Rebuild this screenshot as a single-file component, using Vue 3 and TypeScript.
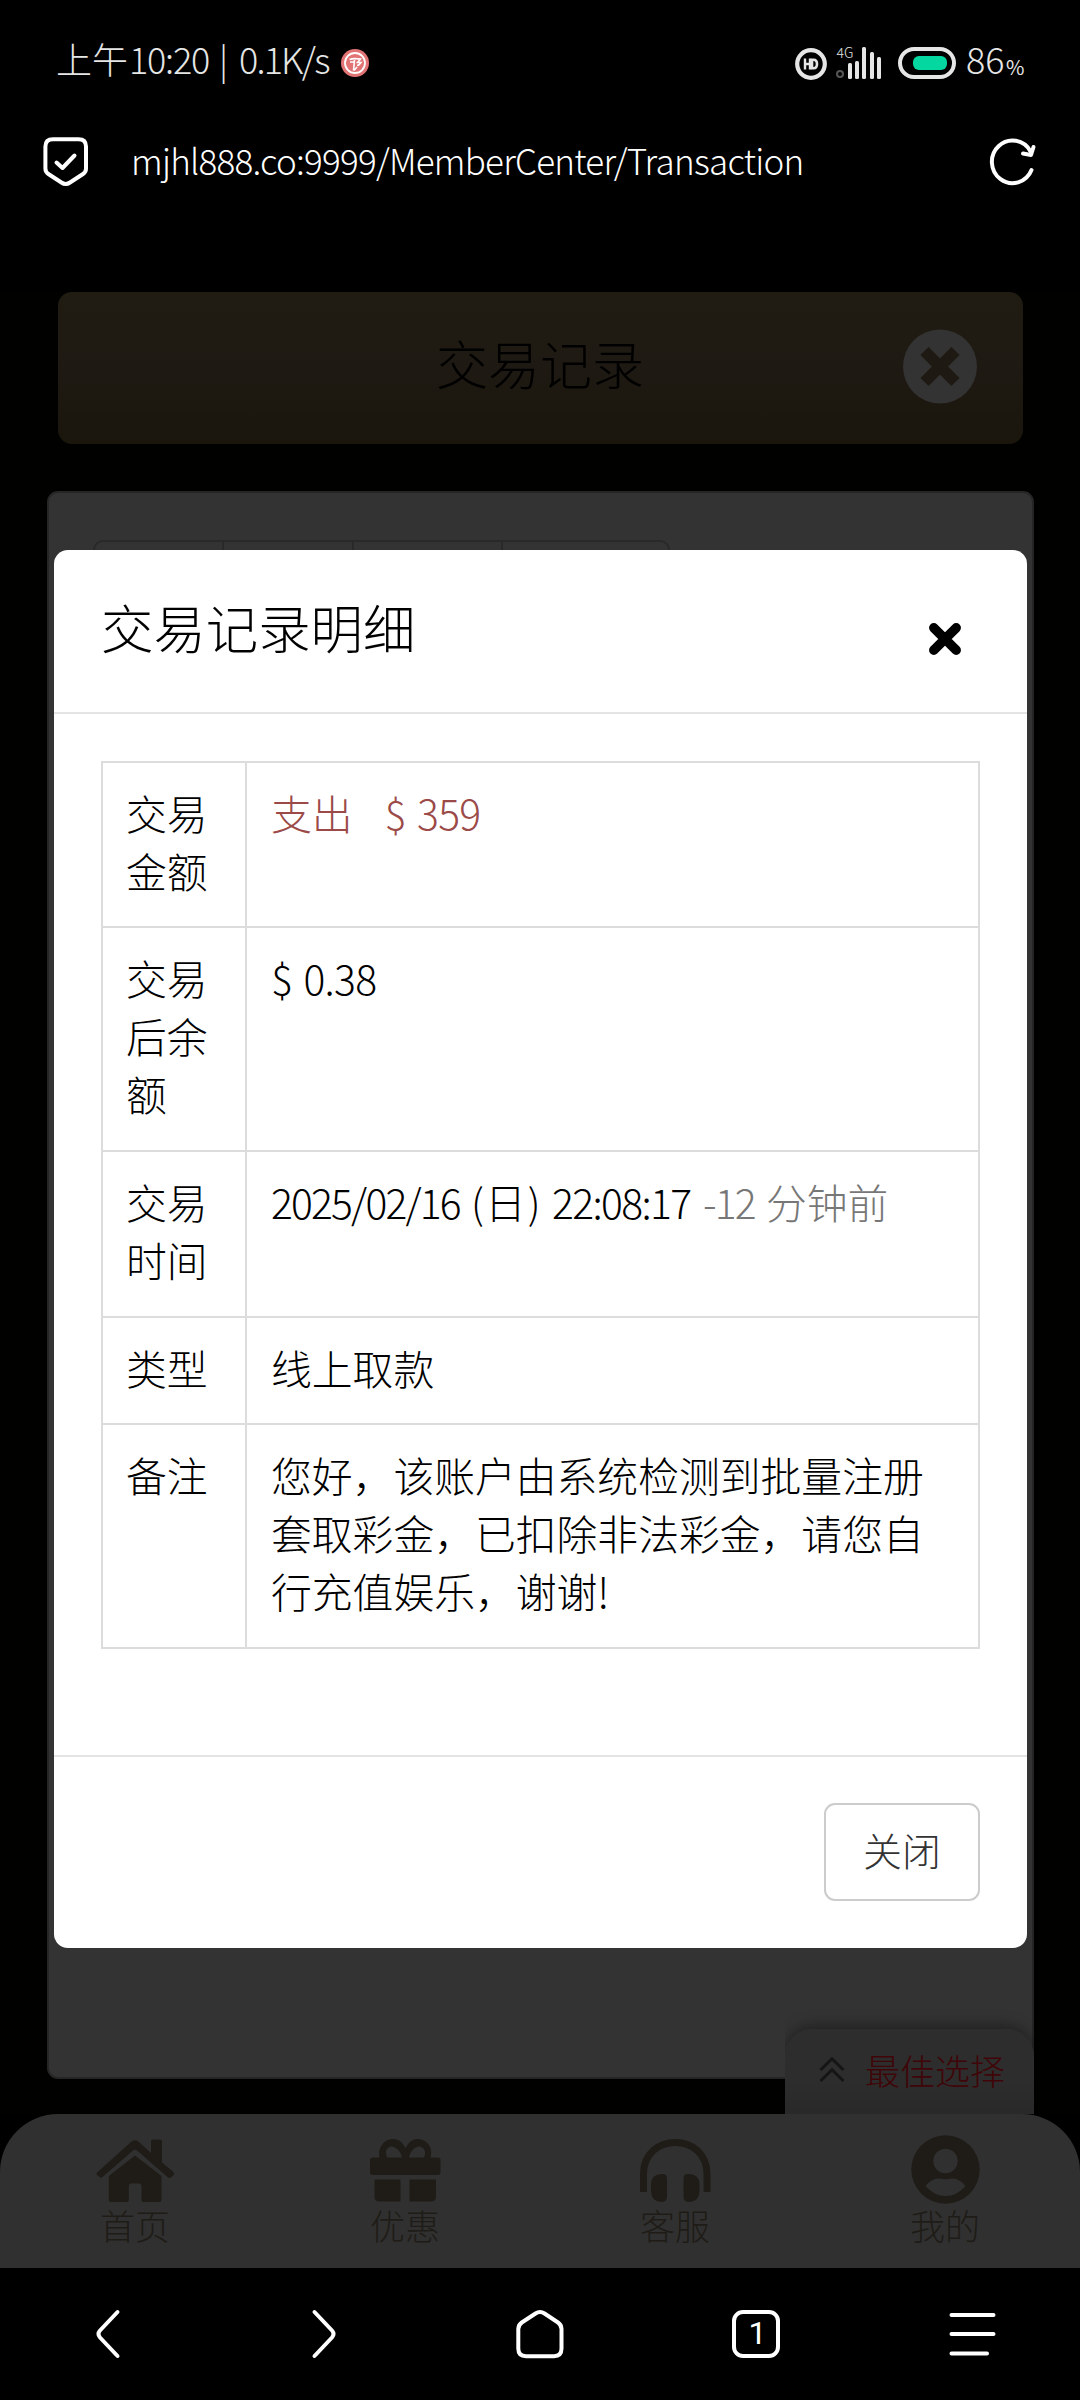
<script setup lang="ts">
interface Row {
  label: string
  kind: 'amount' | 'plain' | 'time' | 'note'
  height: number
  text: string
}

const rows: Row[] = [
  { label: '交易金额', kind: 'amount', height: 165, text: '$ 359' },
  { label: '交易后余额', kind: 'plain', height: 224, text: '$ 0.38' },
  { label: '交易时间', kind: 'time', height: 166, text: '2025/02/16' },
  { label: '类型', kind: 'note', height: 107, text: '线上取款' },
  {
    label: '备注',
    kind: 'note',
    height: 226,
    text: '您好，该账户由系统检测到批量注册套取彩金，已扣除非法彩金，请您自行充值娱乐，谢谢!',
  },
]

const filters: number[] = [127, 130, 149, 167]
const bars: number[] = [16, 18, 32, 27, 22]
</script>

<template>
  <div class="screen">
    <header class="status">
      <span class="cn">上午</span>
      <span class="clock">10:20</span>
      <span class="sep">|</span>
      <span class="rate">0.1K/s</span>
      <svg class="badge" viewBox="0 0 28 28">
        <circle cx="14" cy="14" r="14" fill="#e27475" />
        <circle cx="14" cy="14" r="10" fill="none" stroke="#fff" stroke-width="1.8" />
        <path d="M8.500 10.500Q12 9 19.500 10L16.500 13.500H20Q18 16.500 16 16.500M13.500 11L12.500 21.500M9 13H13M13 21.500L16 18" fill="none" stroke="#fff" stroke-width="1.600" />
      </svg>
      <span class="grow"></span>
      <svg class="hd" viewBox="0 0 32 32">
        <circle cx="16" cy="16" r="13.800" fill="none" stroke="#e6e6e6" stroke-width="4.200" />
        <path d="M10 10.500V21.500M10 16H15M15 10.500V21.500" fill="none" stroke="#e6e6e6" stroke-width="2.400" />
        <path d="M17 11.800H18.500Q22 11.800 22 16Q22 20.200 18.500 20.200H17Z" fill="none" stroke="#e6e6e6" stroke-width="2.600" />
      </svg>
      <div class="signal">
        <div class="net"><span>4G</span><i></i></div>
        <b v-for="(h, i) in bars" :key="i" :style="{ height: h + 'px' }"></b>
      </div>
      <div class="battery"><i></i></div>
      <span class="pct">86</span><span class="sign">%</span>
    </header>

    <div class="address">
      <svg class="shield" viewBox="0 0 46 50">
        <path d="M10 2.200H35.500Q43 2.200 43 9.500V31.500Q43 35 40 37L27 45.500Q22.700 48.500 18.400 45.500L5.400 37Q2.400 35 2.400 31.500V9.500Q2.400 2.200 10 2.200Z" />
        <path d="M13.500 25.500L19.500 31L31.500 18.500" />
      </svg>
      <span class="url">mjhl888.co:9999/MemberCenter/Transaction</span>
      <svg class="reload" viewBox="0 0 48 48">
        <path d="M42.500 32A20.600 21.300 0 1 1 41.500 13.500" />
        <path d="M44.500 9L42 17L34 15.500" />
      </svg>
    </div>

    <main class="page">
      <div class="heading">
        <span>交易记录</span>
        <svg viewBox="0 0 74 76" preserveAspectRatio="none">
          <circle cx="37" cy="37.500" r="37" fill="#333" />
          <path d="M21.500 22L52.500 53M52.500 22L21.500 53" stroke="#1e1912" stroke-width="11.500" />
        </svg>
      </div>
      <div class="panel">
        <div class="filters">
          <i v-for="(w, i) in filters" :key="i" :style="{ width: w + 'px' }"></i>
        </div>
      </div>
      <div class="best">
        <svg viewBox="0 0 26 26"><path d="M1.500 13L13 1.800L24.500 13M1.500 24L13 12.800L24.500 24" /></svg>
        <span>最佳选择</span>
      </div>
    </main>

    <nav class="tabs">
      <div>
        <svg viewBox="0 0 80 70">
          <path d="M1.500 39L36 8Q40 4.500 44 8L56 19V7.500Q56 5.500 58 5.500H65Q67 5.500 67 7.500V28.500L78.500 38Q80 39.500 78.500 41.200L76 43.500Q74 44.500 72.500 43L42 16.500Q40 14.800 38 16.500L7.500 43Q6 44.500 4.500 43L1.500 40.500Z" />
          <path d="M13.800 42L40 21.500L66.500 42V66Q66.500 68 64.500 68H48.500Q46.500 68 46.500 66V52Q46.500 49.500 44.500 49.500H35.500Q33.800 49.500 33.800 52V66Q33.800 68 32 68H15.800Q13.800 68 13.800 66Z" />
        </svg>
        <span>首页</span>
      </div>
      <div>
        <svg viewBox="0 0 80 70">
          <path fill-rule="evenodd" d="M8 23.500H14.500C11 8 29 -1 37.500 9.500L40.500 14L43.500 9.500C52 -1 70 8 65.500 23.500H73Q75.500 23.500 75.500 26V38.500Q75.500 41 73 41H7.500Q5 41 5 38.500V26Q5 23.500 8 23.500ZM22 23.500H37C36 17 29 11 24.500 13C20 15 20.500 19.500 22 23.500ZM44 23.500H59C61 19 60.500 15 56 13C51.500 11 45 17 44 23.500Z" />
          <path d="M9.500 45.500H35.500V67.500H14.500Q9.500 67.500 9.500 62.500ZM44.500 45.500H71V62.500Q71 67.500 66 67.500H44.500Z" />
        </svg>
        <span>优惠</span>
      </div>
      <div>
        <svg viewBox="0 0 80 70">
          <path d="M8.500 58V40C8.500 -2 72 -2 72 40V58" fill="none" stroke="#1f1c17" stroke-width="7" />
          <path d="M26 40H28Q32 40 32 45V63Q32 68 26 68Q16 67 16 57V50Q16 41 26 40Z" />
          <path d="M54.500 40H52.500Q48.500 40 48.500 45V63Q48.500 68 54.500 68Q64.500 67 64.500 57V50Q64.500 41 54.500 40Z" />
        </svg>
        <span>客服</span>
      </div>
      <div>
        <svg viewBox="0 0 80 70">
          <circle cx="40.500" cy="35.500" r="34.200" />
          <circle cx="40.500" cy="27" r="12.200" fill="#303030" />
          <path d="M20.500 52Q27 44 34 44.500Q40.500 46 47 44.500Q54 44 60.500 52Q52 62 40.500 62Q29 62 20.500 52Z" fill="#303030" />
        </svg>
        <span>我的</span>
      </div>
    </nav>

    <footer class="browser">
      <div><svg viewBox="0 0 50 50"><path d="M34.500 3L17 21.500Q14 25 17 28.500L34.500 47" /></svg></div>
      <div><svg viewBox="0 0 50 50"><path d="M15.500 3L33 21.500Q36 25 33 28.500L15.500 47" /></svg></div>
      <div><svg viewBox="0 0 50 50"><path d="M20.500 4.500Q25 1.500 29.500 4.500L43 13.500Q46.500 16 46.500 20V39.500Q46.500 47.200 39 47.200H11Q3.300 47.200 3.300 39.500V20Q3.300 16 6.800 13.500Z" /></svg></div>
      <div><span class="count">1</span></div>
      <div><svg viewBox="0 0 50 50"><path d="M4.500 6H46.500M4.500 25H46.500M4.500 44.500H40" /></svg></div>
    </footer>

    <section class="modal">
      <div class="modal-head">
        <h1>交易记录明细</h1>
        <svg viewBox="0 0 32 32"><path d="M4.800 4.800L27.200 27.200M27.200 4.800L4.800 27.200" /></svg>
      </div>
      <div class="modal-body">
        <div v-for="row in rows" :key="row.label" class="row" :style="{ height: row.height + 'px' }">
          <div class="label">{{ row.label }}</div>
          <div class="value" :class="row.kind">
            <template v-if="row.kind === 'amount'">
              <span class="out">支出</span><span class="num">{{ row.text }}</span>
            </template>
            <template v-else-if="row.kind === 'time'">
              <span class="date">{{ row.text }}</span><span class="day"><i>(</i>日<i>)</i></span><span class="hour">22:08:17</span><span class="ago">-12</span><span class="unit">分钟前</span>
            </template>
            <template v-else>{{ row.text }}</template>
          </div>
        </div>
      </div>
      <div class="modal-foot"><button type="button">关闭</button></div>
    </section>
  </div>
</template>

<style>
html,
body {
  background: #000;
}
</style>

<style scoped>
.screen {
  position: relative;
  width: 1080px;
  height: 2400px;
  overflow: hidden;
  display: flex;
  flex-direction: column;
  background: #000;
  color: #000;
  font-family: 'Noto Sans CJK SC', sans-serif;
  font-weight: 300;
}
.screen * {
  box-sizing: border-box;
}
svg {
  display: block;
  flex: none;
}
.status {
  height: 120px;
  padding: 2px 55px 0 56px;
  display: flex;
  align-items: center;
  color: #e6e6e6;
  font-size: 36px;
  font-weight: 200;
  white-space: nowrap;
}
.status > span:not(.grow) {
  flex: none;
  margin-bottom: 6px;
}
.cn {
  width: 73px;
}
.clock {
  width: 90px;
  letter-spacing: -1.200px;
}
.sep {
  width: 20px;
}
.rate {
  width: 102px;
  letter-spacing: -1.800px;
}
.status .grow {
  flex: 1;
}
.badge {
  width: 28px;
  height: 28px;
  margin-top: 4px;
}
.hd {
  width: 32px;
  height: 32px;
  margin: 5px 9px 0 0;
}
.signal {
  display: flex;
  align-items: flex-end;
  gap: 3.3px;
  height: 32px;
  margin: 4px 17px 0 0;
}
.net {
  position: relative;
  width: 9px;
  height: 32px;
}
.net span {
  position: absolute;
  left: 1px;
  top: -2px;
  font-size: 14px;
  line-height: 14px;
  font-weight: 300;
}
.net i {
  position: absolute;
  left: 0;
  bottom: 1px;
  width: 8px;
  height: 8px;
  border: 2px solid #555;
  border-radius: 50%;
}
.signal b {
  width: 4px;
  border-radius: 1.5px;
  background: #e6e6e6;
}
.battery {
  width: 58px;
  height: 32px;
  margin: 4px 10px 0 0;
  border: 4px solid #e6e6e6;
  border-radius: 16px;
  display: flex;
  align-items: center;
  padding-left: 11px;
}
.battery i {
  width: 34px;
  height: 14px;
  border-radius: 6px;
  background: #04d8a0;
}
.pct {
  width: 40px;
}
.sign {
  width: 19px;
  font-size: 20px;
  font-weight: 400;
  padding-top: 16px;
}
.address {
  height: 172px;
  padding: 0 43px 88px 43px;
  display: flex;
  align-items: center;
  color: #fff;
}
.shield {
  width: 46px;
  height: 50px;
  fill: none;
  stroke: #fff;
  stroke-width: 4;
  stroke-linecap: round;
  stroke-linejoin: round;
}
.url {
  flex: 1;
  margin: 0 0 6px 42px;
  font-size: 35px;
  letter-spacing: -0.750px;
  white-space: nowrap;
}
.reload {
  width: 48px;
  height: 48px;
  fill: none;
  stroke: #fff;
  stroke-width: 4;
  stroke-linecap: round;
  stroke-linejoin: round;
}
.page {
  height: 1822px;
  display: flex;
  flex-direction: column;
  position: relative;
  background: #010100;
}
.heading {
  height: 152px;
  margin: 0 57px 47px 58px;
  padding: 0 46px 0 378px;
  border-radius: 14px;
  background: linear-gradient(#211c12, #1e1912 50%, #1a160c);
  display: flex;
  align-items: center;
  justify-content: space-between;
  font-size: 52px;
}
.heading span {
  margin-bottom: 12px;
}
.heading svg {
  width: 74px;
  height: 76px;
  margin-bottom: 2px;
}
.panel {
  height: 1588px;
  margin: 0 46px 0 47px;
  padding: 47px 44px;
  border: 2px solid #262626;
  border-radius: 11px;
  background: #333;
}
.filters {
  display: flex;
  width: 577px;
  height: 80px;
  border: 2px solid #292929;
  border-radius: 10px;
}
.filters i + i {
  border-left: 2px solid #292929;
}
.best {
  position: absolute;
  left: 785px;
  bottom: 0;
  width: 249px;
  height: 85px;
  padding: 0 0 3px 34px;
  border-radius: 28px 28px 0 0;
  background: linear-gradient(#2d2d2d 60%, #292929);
  box-shadow: 0 -4px 14px rgba(0, 0, 0, 0.35);
  clip-path: inset(-30px 0 0 0);
  display: flex;
  align-items: center;
  color: #400508;
  font-size: 35px;
}
.best span {
  margin-bottom: 2px;
}
.best svg {
  width: 26px;
  height: 26px;
  margin-right: 20px;
  fill: none;
  stroke: #151515;
  stroke-width: 3;
}
.tabs {
  height: 154px;
  border-radius: 58px 58px 0 0;
  background: #303030;
  display: flex;
  position: relative;
}
.tabs div {
  flex: 1;
  display: flex;
  flex-direction: column;
  align-items: center;
  padding-top: 20px;
  color: #1f1c17;
  font-size: 35px;
  line-height: 42px;
}
.tabs svg {
  width: 80px;
  height: 70px;
  fill: #1f1c17;
}
.browser {
  height: 132px;
  background: #000;
  display: flex;
}
.browser div {
  flex: 1;
  display: flex;
  align-items: center;
  justify-content: center;
}
.browser svg {
  width: 50px;
  height: 50px;
  fill: none;
  stroke: #fff;
  stroke-width: 4;
  stroke-linecap: round;
  stroke-linejoin: round;
}
.count {
  width: 48px;
  height: 48px;
  padding-left: 3px;
  border: 4px solid #fff;
  border-radius: 11px;
  color: #fff;
  font-family: Roboto, sans-serif;
  font-size: 32px;
  font-weight: 400;
  line-height: 38px;
  text-align: center;
}
.modal {
  position: absolute;
  left: 54px;
  top: 550px;
  width: 973px;
  height: 1398px;
  border-radius: 14px;
  background: #fff;
  display: flex;
  flex-direction: column;
}
.modal-head {
  height: 164px;
  padding: 0 66px 0 47px;
  border-bottom: 2px solid #e4e4e4;
  display: flex;
  align-items: center;
  justify-content: space-between;
}
h1 {
  margin: 0 0 11px;
  font-size: 52.400px;
  font-weight: 300;
  line-height: 76px;
}
.modal-head svg {
  width: 32px;
  height: 32px;
  margin-top: 16px;
  fill: none;
  stroke: #000;
  stroke-width: 9.500;
  stroke-linecap: round;
}
.modal-body {
  margin: 47px 47px 0;
  width: 879px;
  border: 2px solid #dcdcdc;
  border-top: 0;
  border-bottom: 0;
  font-size: 40.800px;
  line-height: 58.200px;
}
.row {
  display: flex;
  border-top: 2px solid #dcdcdc;
}
.row:last-child {
  border-bottom: 2px solid #dcdcdc;
}
.label {
  width: 144px;
  padding: 21px 20px 0 23px;
  border-right: 2px solid #dcdcdc;
}
.value {
  flex: 1;
  padding: 21px 22px 0 24px;
}
.amount {
  color: #9b4a48;
}
.out {
  margin-right: 32px;
}
.plain,
.num {
  word-spacing: 3px;
  letter-spacing: -0.700px;
}
.time {
  display: flex;
  white-space: nowrap;
}
.date {
  width: 200px;
  letter-spacing: -1.800px;
}
.day {
  width: 81px;
  display: flex;
}
.day i {
  font-style: normal;
  width: 14px;
}
.day i:last-child {
  padding-left: 2px;
}
.hour {
  width: 151px;
  letter-spacing: -1.600px;
}
.ago,
.unit {
  color: #777;
}
.ago {
  width: 63px;
  letter-spacing: -1.800px;
}
.modal-foot {
  margin-top: auto;
  height: 193px;
  padding: 46px 47px 0;
  border-top: 2px solid #e4e4e4;
  display: flex;
  justify-content: flex-end;
}
button {
  width: 156px;
  height: 98px;
  padding: 0 0 7px;
  border: 2px solid #ccc;
  border-radius: 11px;
  background: #fff;
  color: #333;
  font: inherit;
  font-size: 39px;
}
</style>
